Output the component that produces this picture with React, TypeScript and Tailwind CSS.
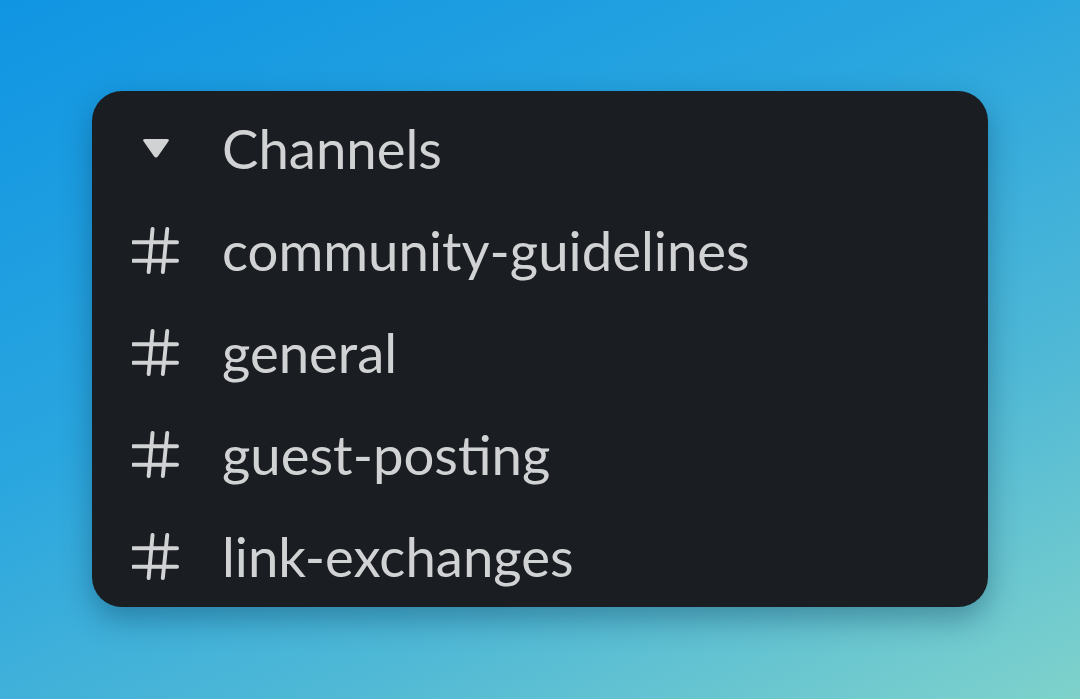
const channels = ['community-guidelines', 'general', 'guest-posting', 'link-exchanges'];

function Hash() {
    return (
        <svg width="47" height="47" viewBox="0 0 48 48" fill="none" stroke="#d1d2d3" strokeWidth="4" strokeLinecap="round">
            <path d="M1 15.5H46M1 34.5H46M21 2L17 46M36 2L31.5 46" />
        </svg>
    );
}

function Caret() {
    return (
        <svg width="30" height="24" viewBox="0 0 30 24">
            <path d="M4 3H26Q29 3 27.3 5.6L17.2 20Q15 23 12.8 20L2.7 5.6Q1 3 4 3Z" fill="#d1d2d3" />
        </svg>
    );
}

export default function App() {
    return (
        <div className="w-[1080px] h-[699px] flex items-start justify-center pt-[91px] bg-[linear-gradient(155deg,#1095e3_0%,#2aa6df_40%,#4fb8d6_70%,#7fd2cb_100%)] font-['Lato','Liberation_Sans',sans-serif]">
            <div className="w-[896px] h-[516px] rounded-[30px] bg-[#1a1d21] shadow-[0_12px_30px_rgba(0,40,70,0.35)] flex flex-col pt-[6px]">
                {/* Section header */}
                <div className="h-[103px] flex items-center pl-[49px]">
                    <div className="w-[81px] flex">
                        <Caret />
                    </div>
                    <span className="text-[54.5px] leading-none text-[#d1d2d3]">Channels</span>
                </div>

                {/* Channel rows */}
                {channels.map((name) => (
                    <div key={name} className="h-[103px] flex items-center pl-[40px]">
                        <div className="w-[90px] flex">
                            <Hash />
                        </div>
                        <span className="text-[54.5px] leading-none text-[#d1d2d3]">{name}</span>
                    </div>
                ))}
            </div>
        </div>
    );
}
